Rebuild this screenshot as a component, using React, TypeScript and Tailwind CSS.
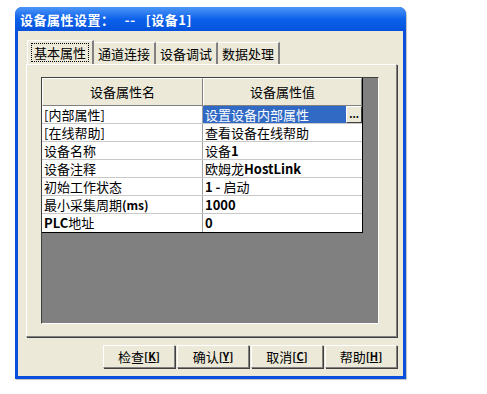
const rows: { name: React.ReactNode; value: React.ReactNode; selected?: boolean }[] = [
  { name: "[内部属性]", value: "设置设备内部属性", selected: true },
  { name: "[在线帮助]", value: "查看设备在线帮助" },
  { name: "设备名称", value: <>设备<b>1</b></> },
  { name: "设备注释", value: <>欧姆龙<b>HostLink</b></> },
  { name: "初始工作状态", value: <><b>1 - </b>启动</> },
  { name: "最小采集周期", value: <b>1000</b> },
  { name: <><b>PLC</b>地址</>, value: <b>0</b> },
];

const tabs = ["基本属性", "通道连接", "设备调试", "数据处理"];

const buttons: [string, string][] = [
  ["检查", "K"],
  ["确认", "Y"],
  ["取消", "C"],
  ["帮助", "H"],
];

export default function App() {
  return (
    <div
      className="w-[487px] h-[394px] bg-white pt-[7px] pl-[15px] text-black"
      style={{ fontFamily: '"Noto Sans CJK SC", "Liberation Sans", sans-serif' }}
    >
      {/* Window */}
      <div className="w-[391px] h-[372px] rounded-t-[7px] bg-[#0a4fdc] flex flex-col px-[3px] pb-[3px] shadow-[1px_1px_1px_rgba(0,0,0,0.25)]">
        {/* Title bar */}
        <div className="h-[24px] -mx-[3px] rounded-t-[7px] bg-gradient-to-b from-[#4a96f8] via-[#0c61ea] to-[#0552dc] flex items-center pl-[5px]">
          <span className="text-white text-[13px] font-bold tracking-[0.5px] leading-none whitespace-pre">
            设备属性设置：   --   [设备1]
          </span>
        </div>

        {/* Body */}
        <div className="flex-1 bg-[#ece9d8] flex flex-col pl-[8px] pr-[6px]">
          {/* Tabs */}
          <div className="flex pt-[9px] pl-[1px] h-[33px]">
            {tabs.map((t, i) => (
              <div
                key={t}
                className={
                  i === 0
                    ? "h-[24px] px-[3px] flex items-center bg-[#ece9d8] border-t border-l border-white border-r-2 border-r-[#808080] relative z-10 -mb-[1px]"
                    : "h-[22px] mt-[2px] px-[4px] flex items-center border-t border-white border-r-2 border-r-[#808080]"
                }
              >
                <span
                  className={
                    i === 0
                      ? "text-[13px] leading-[17px] px-[2px] border border-dotted border-black"
                      : "text-[13px] leading-[17px]"
                  }
                >
                  {t}
                </span>
              </div>
            ))}
          </div>

          {/* Tab panel */}
          <div className="w-[371px] h-[273px] border-t border-l border-white border-r border-b border-r-[#808080] border-b-[#808080] shadow-[1px_1px_0_#404040] pt-[12px] pl-[14px]">
            {/* Grid */}
            <div className="w-[338px] h-[247px] bg-[#808080] border-t border-l border-[#404040] border-r border-b border-r-white border-b-white">
              <div className="w-[321px] bg-white border-r border-b border-black text-[13px]">
                {/* header */}
                <div className="flex h-[28px] bg-[#ece9d8]">
                  <div className="w-[161px] flex items-center justify-center border-t border-l border-white border-r border-b border-r-[#808080] border-b-[#808080]">
                    设备属性名
                  </div>
                  <div className="flex-1 flex items-center justify-center border-t border-l border-white border-r border-b border-r-[#808080] border-b-[#808080]">
                    设备属性值
                  </div>
                </div>
                {rows.map((r, i) => (
                  <div key={i} className="flex h-[18px] border-b border-[#c8c8c8] last:border-b-0">
                    <div className="w-[161px] border-r border-[#a0a0a0] pl-[2px] leading-[17px] whitespace-nowrap">
                      {i === 5 ? (
                        <>
                          最小采集周期<b className="text-[12px]">(ms)</b>
                        </>
                      ) : (
                        r.name
                      )}
                    </div>
                    {r.selected ? (
                      <div className="flex-1 flex">
                        <div className="flex-1 bg-[#316ac5] text-white pl-[2px] leading-[17px]">{r.value}</div>
                        <div className="w-[16px] h-[17px] bg-[#ece9d8] border-t border-l border-white border-r border-b border-r-[#404040] border-b-[#404040] flex items-end justify-center pb-[3px] text-[10px] leading-none font-bold">
                          ...
                        </div>
                      </div>
                    ) : (
                      <div className="flex-1 pl-[2px] leading-[17px] whitespace-nowrap">{r.value}</div>
                    )}
                  </div>
                ))}
              </div>
            </div>
          </div>

          {/* Buttons */}
          <div className="flex justify-end gap-[2px] mt-[8px]">
            {buttons.map(([label, key]) => (
              <div
                key={key}
                className="w-[72px] h-[23px] bg-[#ece9d8] border-t border-l border-white border-r border-b border-r-[#808080] border-b-[#808080] shadow-[1px_1px_0_#404040] flex items-center justify-center text-[13px]"
              >
                {label}
                <b className="text-[11px]">
                  [<span className="underline">{key}</span>]
                </b>
              </div>
            ))}
          </div>
        </div>
      </div>
    </div>
  );
}
